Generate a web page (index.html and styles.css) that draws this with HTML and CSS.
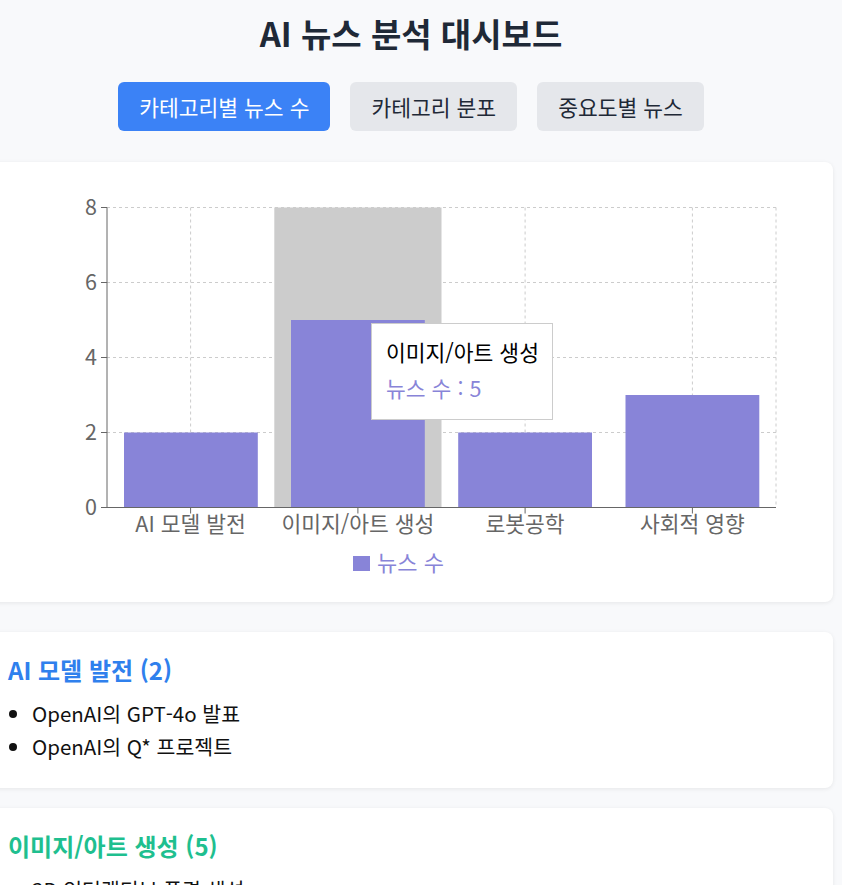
FILE: index.html
```html
<!DOCTYPE html>
<html lang="ko">
<head>
    <meta charset="UTF-8">
    <meta name="viewport" content="width=device-width, initial-scale=1.0">
    <title>AI 뉴스 분석 대시보드</title>
    <link rel="stylesheet" href="styles.css">
</head>
<body>
    <div class="dashboard">
        <h1 class="title">AI 뉴스 분석 대시보드</h1>

        <div class="tabs">
            <button class="tab active">카테고리별 뉴스 수</button>
            <button class="tab">카테고리 분포</button>
            <button class="tab">중요도별 뉴스</button>
        </div>

        <div class="chart-card">
            <svg class="chart" width="846" height="440" viewBox="0 0 846 440">
                <!-- grid -->
                <g class="grid">
                    <line x1="120" y1="45.5" x2="789" y2="45.5"/>
                    <line x1="120" y1="120.5" x2="789" y2="120.5"/>
                    <line x1="120" y1="195.5" x2="789" y2="195.5"/>
                    <line x1="120" y1="270.5" x2="789" y2="270.5"/>
                    <line x1="203.6" y1="45.5" x2="203.6" y2="345.5"/>
                    <line x1="370.9" y1="45.5" x2="370.9" y2="345.5"/>
                    <line x1="538.1" y1="45.5" x2="538.1" y2="345.5"/>
                    <line x1="705.4" y1="45.5" x2="705.4" y2="345.5"/>
                    <line x1="789" y1="45.5" x2="789" y2="345.5"/>
                </g>

                <!-- hover cursor -->
                <rect class="cursor" x="287.3" y="45.5" width="167.2" height="300"/>

                <!-- bars -->
                <g class="bars">
                    <rect x="137" y="270.5" width="133.8" height="75"/>
                    <rect x="304" y="158" width="133.8" height="187.5"/>
                    <rect x="471.2" y="270.5" width="133.8" height="75"/>
                    <rect x="638.5" y="233" width="133.8" height="112.5"/>
                </g>

                <!-- axes -->
                <g class="axis">
                    <line x1="120" y1="45.5" x2="120" y2="345.5"/>
                    <line x1="120" y1="345.5" x2="789" y2="345.5"/>
                    <line x1="114" y1="45.5" x2="120" y2="45.5"/>
                    <line x1="114" y1="120.5" x2="120" y2="120.5"/>
                    <line x1="114" y1="195.5" x2="120" y2="195.5"/>
                    <line x1="114" y1="270.5" x2="120" y2="270.5"/>
                    <line x1="114" y1="345.5" x2="120" y2="345.5"/>
                    <line x1="203.6" y1="345.5" x2="203.6" y2="351.5"/>
                    <line x1="370.9" y1="345.5" x2="370.9" y2="351.5"/>
                    <line x1="538.1" y1="345.5" x2="538.1" y2="351.5"/>
                    <line x1="705.4" y1="345.5" x2="705.4" y2="351.5"/>
                </g>

                <g class="tick-y">
                    <text x="110" y="53">8</text>
                    <text x="110" y="128">6</text>
                    <text x="110" y="203">4</text>
                    <text x="110" y="278">2</text>
                    <text x="110" y="353">0</text>
                </g>
                <g class="tick-x">
                    <text x="203.6" y="370">AI 모델 발전</text>
                    <text x="370.9" y="370">이미지/아트 생성</text>
                    <text x="538.1" y="370">로봇공학</text>
                    <text x="705.4" y="370">사회적 영향</text>
                </g>

                <!-- legend -->
                <rect class="legend-icon" x="366" y="394" width="17" height="15"/>
                <text class="legend-text" x="390" y="409">뉴스 수</text>
            </svg>

            <div class="tooltip">
                <p class="tooltip-label">이미지/아트 생성</p>
                <p class="tooltip-item">뉴스 수 : 5</p>
            </div>
        </div>

        <div class="category-card">
            <h3 class="category-title blue">AI 모델 발전 (2)</h3>
            <ul class="news-list">
                <li>OpenAI의 GPT-4o 발표</li>
                <li>OpenAI의 Q* 프로젝트</li>
            </ul>
        </div>

        <div class="category-card">
            <h3 class="category-title green">이미지/아트 생성 (5)</h3>
            <ul class="news-list">
                <li>3D 인터랙티브 풍경 생성</li>
                <li>Midjourney V6 출시</li>
                <li>DALL·E 3 업데이트</li>
            </ul>
        </div>
    </div>
</body>
</html>
```

FILE: styles.css
```css
* {
    margin: 0;
    padding: 0;
    box-sizing: border-box;
}

body {
    font-family: "Noto Sans CJK KR", "Noto Sans", sans-serif;
    background: #f8f9fb;
    color: #1f2937;
    overflow: hidden;
}

.dashboard {
    padding-top: 11px;
}

.title {
    text-align: center;
    font-size: 33px;
    font-weight: 700;
    line-height: 44px;
    color: #1f2937;
    padding-right: 20px;
}

.tabs {
    display: flex;
    justify-content: center;
    gap: 20px;
    margin-top: 27px;
    padding-right: 20px;
}

.tab {
    font-family: inherit;
    font-size: 21.5px;
    line-height: 25px;
    padding: 12px 21px;
    border: none;
    border-radius: 6px;
    background: #e5e7eb;
    color: #1f2937;
    cursor: pointer;
}

.tab.active {
    background: #3b82f6;
    color: white;
}

.chart-card,
.category-card {
    background: white;
    border-radius: 8px;
    box-shadow: 0 1px 4px rgba(0,0,0,0.08);
    margin: 0 9px 0 -13px;
}

.chart-card {
    position: relative;
    height: 440px;
    margin-top: 31px;
    margin-bottom: 30px;
}

.chart {
    display: block;
}

.grid line {
    stroke: #ccc;
    stroke-dasharray: 3 3;
}

.cursor {
    fill: #ccc;
}

.bars rect {
    fill: #8884d8;
}

.axis line {
    stroke: #666;
    stroke-width: 1;
}

.tick-y text,
.tick-x text {
    fill: #666;
    font-size: 21.5px;
}

.tick-y text {
    text-anchor: end;
}

.tick-x text {
    text-anchor: middle;
}

.legend-icon {
    fill: #8884d8;
}

.legend-text {
    fill: #8884d8;
    font-size: 22px;
}

.tooltip {
    position: absolute;
    left: 384px;
    top: 161px;
    width: 182px;
    height: 97px;
    background: white;
    border: 1px solid #ccc;
    padding: 14px 14px;
}

.tooltip-label {
    font-size: 21.5px;
    line-height: 28px;
    color: #000;
    white-space: nowrap;
}

.tooltip-item {
    font-size: 21.5px;
    line-height: 28px;
    margin-top: 8px;
    color: #8884d8;
}

.category-card {
    padding: 24px 21px 28px;
    margin-bottom: 20px;
}

.category-title {
    font-size: 24px;
    font-weight: 700;
    line-height: 28px;
    margin-bottom: 15px;
}

.category-title.blue {
    color: #2f80ed;
}

.category-title.green {
    color: #1fbf8f;
}

.news-list {
    padding-left: 24px;
    font-size: 20.5px;
    color: #111;
}

.news-list li {
    line-height: 28px;
    margin-bottom: 5px;
}

.news-list li:last-child {
    margin-bottom: 0;
}
```
